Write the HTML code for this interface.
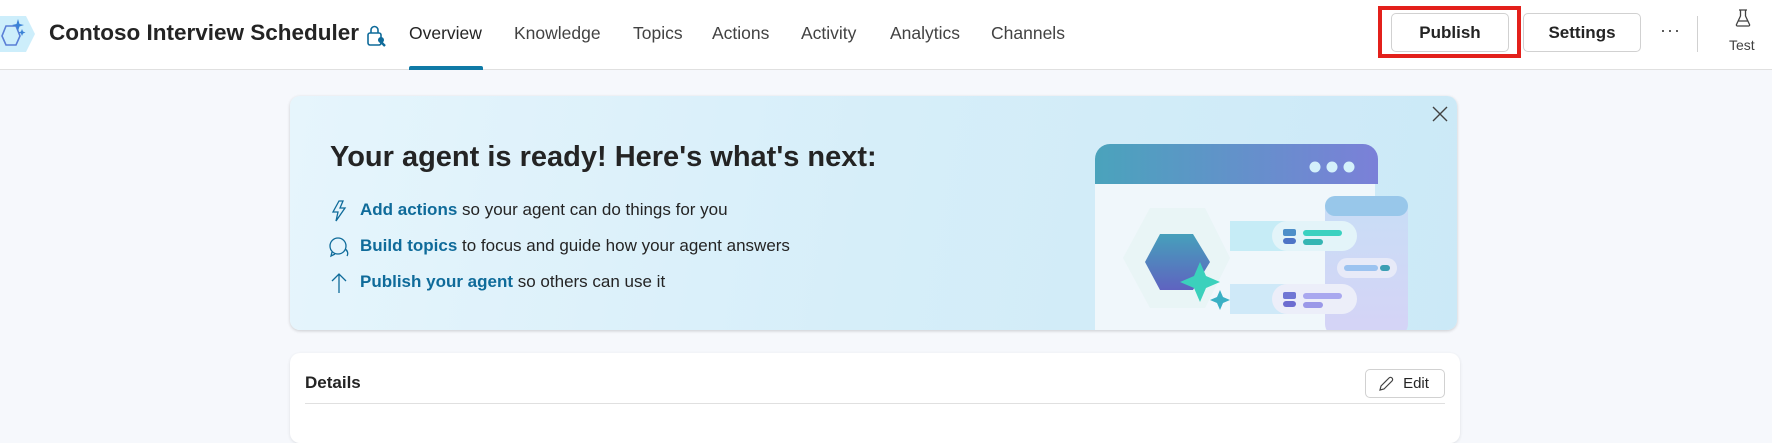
<!DOCTYPE html>
<html><head><meta charset="utf-8"><style>
*{margin:0;padding:0;box-sizing:border-box}
body{width:1772px;height:423px;overflow:hidden;background:#f6f8fc;font-family:"Liberation Sans",sans-serif;color:#242424;position:relative}
.hdr{position:absolute;left:0;top:0;width:1772px;height:70px;background:#fff;border-bottom:1px solid #e0e0e0}
.a{position:absolute;white-space:nowrap}
.tab{position:absolute;top:23px;font-size:17.5px;color:#424242}
.btn{position:absolute;border:1px solid #d1d1d1;border-radius:5px;background:#fff;font-size:17px;font-weight:bold;color:#242424;text-align:center}
.banner{position:absolute;left:290px;top:96px;width:1167px;height:234px;border-radius:10px;background:linear-gradient(100deg,#e6f5fc 0%,#d6eef9 50%,#cbe9f7 100%);box-shadow:0 1px 3px rgba(0,0,0,.18);overflow:hidden}
.li{position:absolute;left:40px;font-size:17px;color:#242424}
.li b{color:#0f6b9a;font-weight:bold}
.card{position:absolute;left:290px;top:353px;width:1170px;height:90px;background:#fff;border-radius:10px;box-shadow:0 1px 3px rgba(0,0,0,.1)}
</style></head><body>
<div class="hdr">
  <svg class="a" style="left:0;top:14px" width="36" height="40" viewBox="0 0 36 40"><polygon points="-2,2 26,2 35,20 26,38 -2,38" fill="#cdeefb"/><polygon points="6,12 16,12 20,22 16,31 6,31 2,22" fill="none" stroke="#5a7fd6" stroke-width="1.6"/><path d="M18 5 L19.5 10 L24 11 L19.5 12.5 L18 17 L16.5 12.5 L12 11 L16.5 10Z" fill="#3b82d6"/><path d="M22 15 l1 2.5 2.5 1 -2.5 1 -1 2.5 -1 -2.5 -2.5 -1 2.5 -1z" fill="#3b82d6"/></svg>
  <div class="a" style="left:49px;top:20px;font-size:22.5px;font-weight:bold;color:#242424">Contoso Interview Scheduler</div>
  <svg class="a" style="left:366px;top:24px" width="22" height="24" viewBox="0 0 22 24"><rect x="2" y="9" width="13" height="12" rx="2" fill="none" stroke="#0f6b9a" stroke-width="1.6"/><path d="M5 9V6a3.5 3.5 0 0 1 7 0v3" fill="none" stroke="#0f6b9a" stroke-width="1.6"/><circle cx="15" cy="16" r="3" fill="#0f6b9a"/><path d="M15 18 l4 4" stroke="#0f6b9a" stroke-width="2.4"/></svg>
  <div class="tab" style="left:409px;color:#242424;font-weight:normal">Overview</div>
  <div class="a" style="left:409px;top:66px;width:74px;height:4px;background:#0f7aa6;border-radius:2px 2px 0 0"></div>
  <div class="tab" style="left:514px">Knowledge</div>
  <div class="tab" style="left:633px">Topics</div>
  <div class="tab" style="left:712px">Actions</div>
  <div class="tab" style="left:801px">Activity</div>
  <div class="tab" style="left:890px">Analytics</div>
  <div class="tab" style="left:991px">Channels</div>
  <div class="a" style="left:1378px;top:6px;width:143px;height:52px;border:4px solid #e3201b"></div>
  <div class="btn" style="left:1391px;top:13px;width:118px;height:39px;line-height:37px">Publish</div>
  <div class="btn" style="left:1523px;top:13px;width:118px;height:39px;line-height:37px">Settings</div>
  <div class="a" style="left:1660px;top:20px;font-size:18px;color:#424242;letter-spacing:1px">···</div>
  <div class="a" style="left:1697px;top:16px;width:1px;height:36px;background:#d1d1d1"></div>
  <svg class="a" style="left:1735px;top:9px" width="16" height="18" viewBox="0 0 16 18"><path d="M4 1h8M5.5 1v6L1.5 15.5a1 1 0 0 0 1 1.5h11a1 1 0 0 0 1-1.5L10.5 7V1M3.5 12h9" fill="none" stroke="#424242" stroke-width="1.3"/></svg>
  <div class="a" style="left:1729px;top:37px;font-size:14px;color:#424242">Test</div>
</div>

<div class="banner">
  <div class="a" style="left:40px;top:45px;font-size:29px;font-weight:bold;color:#242424">Your agent is ready! Here's what's next:</div>
  <svg class="a" style="left:40px;top:104px" width="18" height="22" viewBox="0 0 18 22"><path d="M9 1 L3 12 H8 L6 21 L15 8 H10 L13 1Z" fill="none" stroke="#0f6b9a" stroke-width="1.3"/></svg>
  <div class="li" style="left:70px;top:104px"><b>Add actions</b> so your agent can do things for you</div>
  <svg class="a" style="left:38px;top:140px" width="22" height="22" viewBox="0 0 22 22"><circle cx="10" cy="10" r="8" fill="none" stroke="#0f6b9a" stroke-width="1.3"/><path d="M4 16 l-1 4 4-2M17 13 a5 5 0 0 1 2 7" fill="none" stroke="#0f6b9a" stroke-width="1.3"/></svg>
  <div class="li" style="left:70px;top:140px"><b>Build topics</b> to focus and guide how your agent answers</div>
  <svg class="a" style="left:40px;top:176px" width="18" height="22" viewBox="0 0 18 22"><path d="M9 21V2M2 9l7-7 7 7" fill="none" stroke="#0f6b9a" stroke-width="1.3"/></svg>
  <div class="li" style="left:70px;top:176px"><b>Publish your agent</b> so others can use it</div>
  <svg class="a" style="left:1141px;top:9px" width="18" height="18" viewBox="0 0 18 18"><path d="M2 2l14 14M16 2L2 16" stroke="#424242" stroke-width="1.4"/></svg>
  <svg class="a" style="left:800px;top:40px" width="330" height="200" viewBox="0 0 330 200">
    <defs>
      <linearGradient id="hb" x1="0" x2="1"><stop offset="0" stop-color="#4aa3bc"/><stop offset="1" stop-color="#7b80d8"/></linearGradient>
      <linearGradient id="hx" x1="0" y1="0" x2="0" y2="1"><stop offset="0" stop-color="#46a0bb"/><stop offset="1" stop-color="#5f63c0"/></linearGradient>
      <linearGradient id="rp" x1="0" y1="0" x2="0" y2="1"><stop offset="0" stop-color="#c8def6"/><stop offset="1" stop-color="#d5d3f6"/></linearGradient>
    </defs>
    <path d="M5 8 a15 15 0 0 1 15-15 h250 a15 15 0 0 1 15 15 v200 h-280z" transform="translate(0,15)" fill="#f0f7fb"/>
    <rect x="235" y="60" width="83" height="140" rx="12" fill="url(#rp)"/>
    <rect x="235" y="60" width="83" height="20" rx="10" fill="#98c7ea"/>
    <path d="M5 48 v-25 a15 15 0 0 1 15-15 h253 a15 15 0 0 1 15 15 v25z" fill="url(#hb)"/>
    <circle cx="225" cy="31" r="5.5" fill="#d4f1fb"/><circle cx="242" cy="31" r="5.5" fill="#d4f1fb"/><circle cx="259" cy="31" r="5.5" fill="#d4f1fb"/>
    <rect x="140" y="85" width="60" height="30" fill="#c6ecf6"/>
    <rect x="140" y="148" width="60" height="30" fill="#cfe9f8"/>
    <polygon points="60,72 115,72 140,122 115,172 60,172 33,122" fill="#e8f4f6" opacity=".95"/>
    <polygon points="70,98 103,98 120,126 103,154 70,154 55,126" fill="url(#hx)"/>
    <path d="M110 126 l6 14 14 6 -14 6 -6 14 -6 -14 -14 -6 14 -6z" fill="#3bd1bc"/>
    <path d="M130 154 l3 7 7 3 -7 3 -3 7 -3 -7 -7 -3 7 -3z" fill="#3ab0c4"/>
    <rect x="182" y="85" width="85" height="30" rx="15" fill="#e3f4f9"/>
    <rect x="193" y="93" width="13" height="7" rx="2" fill="#4d8fc9"/><rect x="193" y="102" width="13" height="6" rx="3" fill="#4d74c6"/>
    <rect x="213" y="94" width="39" height="6" rx="3" fill="#3bd1c0"/><rect x="213" y="103" width="20" height="6" rx="3" fill="#35b5b3"/>
    <rect x="247" y="122" width="60" height="20" rx="10" fill="#e7eaf8"/>
    <rect x="254" y="129" width="34" height="6" rx="3" fill="#9cc3f0"/><rect x="290" y="129" width="10" height="6" rx="3" fill="#3c9fb4"/>
    <rect x="182" y="148" width="85" height="30" rx="15" fill="#eceef9"/>
    <rect x="193" y="156" width="13" height="7" rx="2" fill="#7076d4"/><rect x="193" y="165" width="13" height="6" rx="3" fill="#6c6cd0"/>
    <rect x="213" y="157" width="39" height="6" rx="3" fill="#a9a8ef"/><rect x="213" y="166" width="20" height="6" rx="3" fill="#9a98e8"/>
  </svg>
</div>

<div class="card">
  <div class="a" style="left:15px;top:20px;font-size:17px;font-weight:bold">Details</div>
  <div class="btn" style="left:1075px;top:16px;width:80px;height:29px;font-weight:normal;font-size:15px;line-height:27px;padding-left:22px">Edit</div>
  <svg class="a" style="left:1088px;top:23px" width="16" height="16" viewBox="0 0 16 16"><path d="M2 14 l1-4 8-8 a2 2 0 0 1 3 3 l-8 8z" fill="none" stroke="#424242" stroke-width="1.2"/></svg>
  <div class="a" style="left:15px;top:50px;width:1140px;height:1px;background:#e0e0e0"></div>
</div>
</body></html>
